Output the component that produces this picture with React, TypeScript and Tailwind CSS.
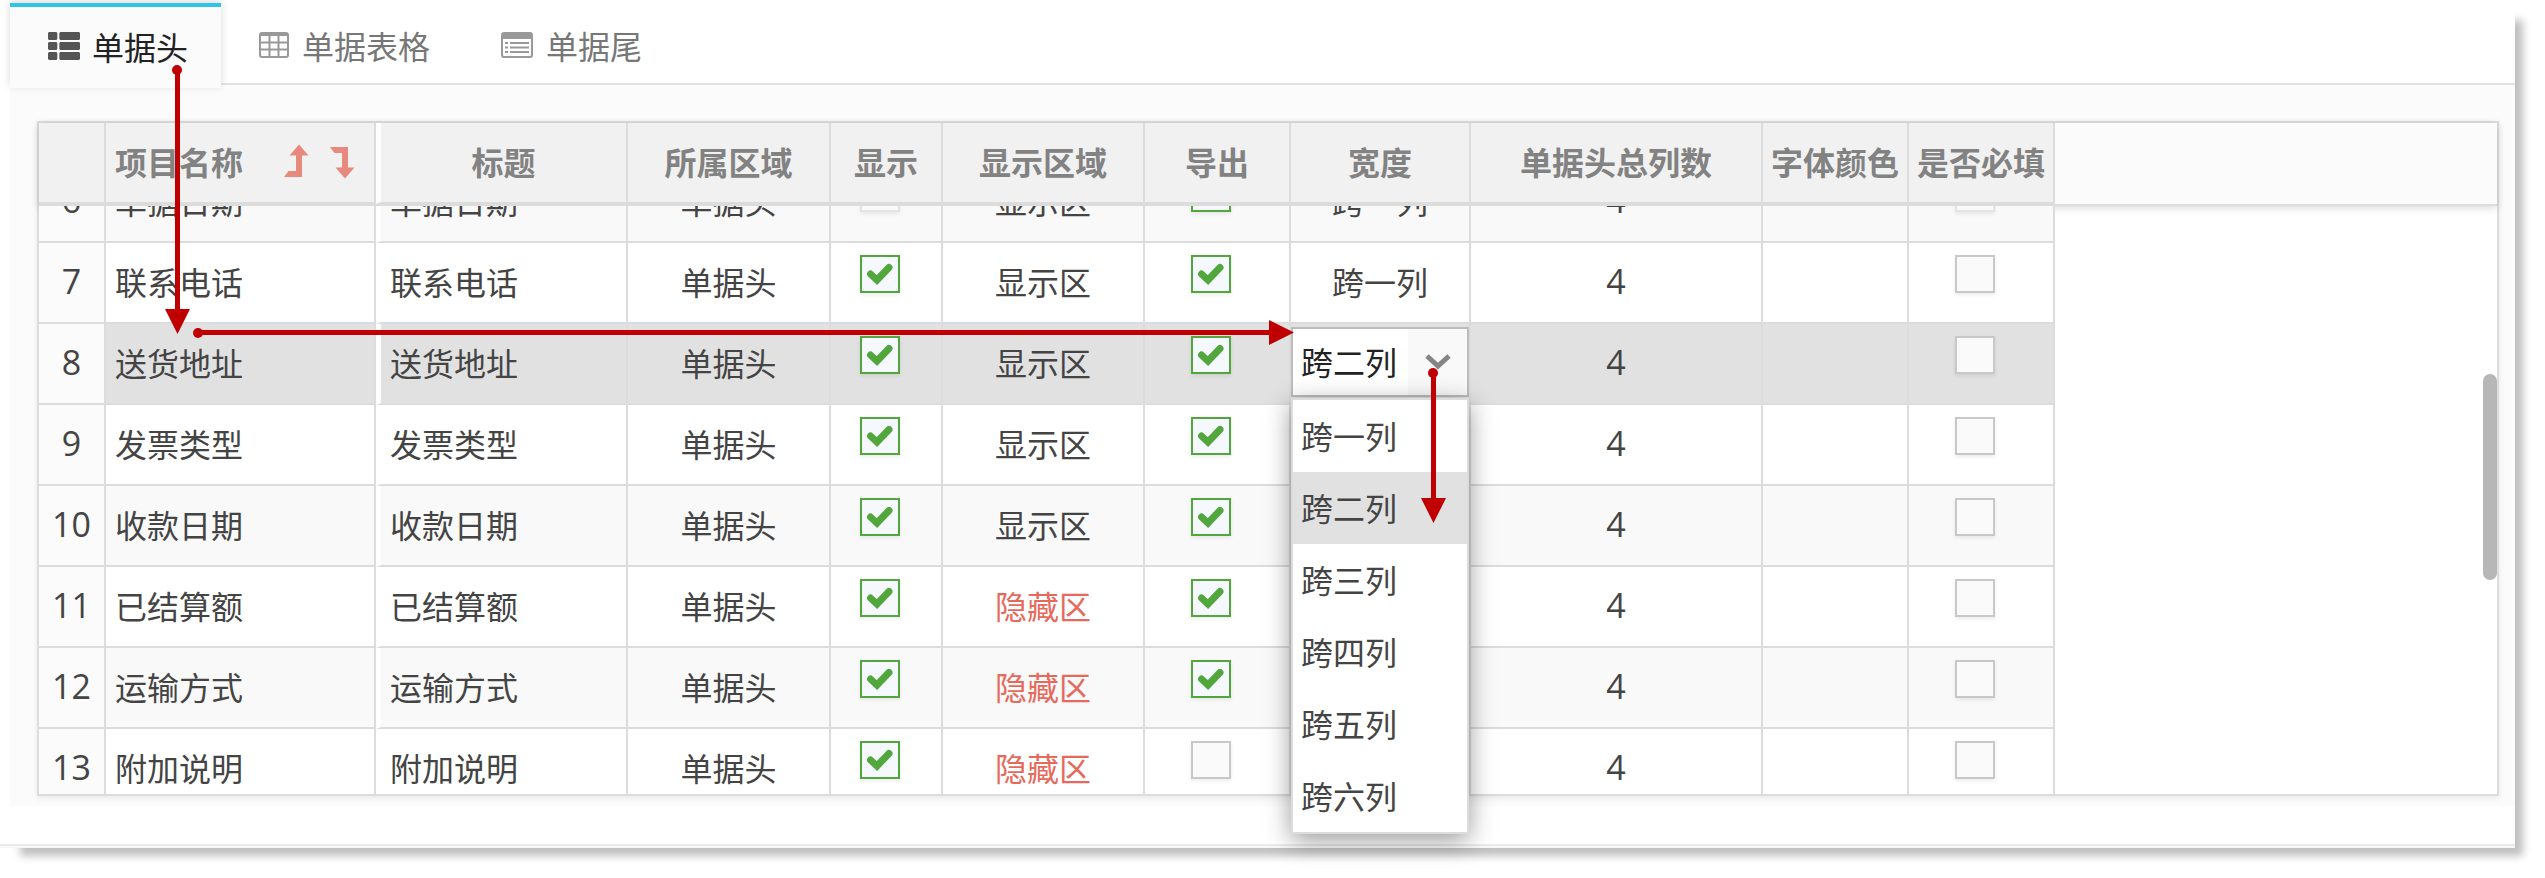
import { useEffect, useRef, useState } from 'react';
import { FaThList } from 'react-icons/fa';

type Row = {
  no: number;
  name: string;
  show: boolean;
  area: string;
  exported: boolean;
  span?: string;
  locked?: boolean;
};

const initialRows: Row[] = [
  { no: 6, name: '单据日期', show: false, area: '显示区', exported: true, span: '跨一列', locked: true },
  { no: 7, name: '联系电话', show: true, area: '显示区', exported: true, span: '跨一列' },
  { no: 8, name: '送货地址', show: true, area: '显示区', exported: true },
  { no: 9, name: '发票类型', show: true, area: '显示区', exported: true },
  { no: 10, name: '收款日期', show: true, area: '显示区', exported: true },
  { no: 11, name: '已结算额', show: true, area: '隐藏区', exported: true },
  { no: 12, name: '运输方式', show: true, area: '隐藏区', exported: true },
  { no: 13, name: '附加说明', show: true, area: '隐藏区', exported: false },
];

const spans = ['跨一列', '跨二列', '跨三列', '跨四列', '跨五列', '跨六列'];
const selectedNo = 8;

const th = 'h-[81px] border-r-2 border-b-2 border-[#dcdcdc] bg-[#f1f1f1] p-0 pb-[3px] text-center font-bold whitespace-nowrap';
const td = 'h-[81px] border-r-2 border-b-2 border-[#dcdcdc] p-0 pb-[3px] text-center align-middle whitespace-nowrap';

function Columns() {
  return (
    <colgroup>
      <col className="w-[67px]" />
      <col className="w-[270px]" />
      <col className="w-[252px]" />
      <col className="w-[203px]" />
      <col className="w-[112px]" />
      <col className="w-[202px]" />
      <col className="w-[146px]" />
      <col className="w-[180px]" />
      <col className="w-[292px]" />
      <col className="w-[146px]" />
      <col className="w-[146px]" />
    </colgroup>
  );
}

function TableIcon() {
  return (
    <svg width="30" height="26" viewBox="0 0 30 26" fill="none" stroke="currentColor" strokeWidth="2">
      <rect x="1" y="1" width="28" height="24" rx="2" />
      <path d="M1 2.500h28" strokeWidth="3" />
      <path d="M1 10.500h28M1 17.500h28M10.500 4v21M19.500 4v21" />
    </svg>
  );
}

function FormIcon() {
  return (
    <svg width="32" height="26" viewBox="0 0 32 26" fill="none" stroke="currentColor" strokeWidth="2">
      <rect x="1" y="1" width="30" height="24" rx="2" />
      <path d="M1 4h30" strokeWidth="6" />
      <path d="M4 11h3M9 11h19M4 15.500h3M9 15.500h19M4 20h3M9 20h19" />
    </svg>
  );
}

function Check({ label, checked, disabled }: { label: string; checked: boolean; disabled?: boolean }) {
  const [on, setOn] = useState(checked);

  return (
    <label className="grid place-items-center pr-3 pb-[14px]">
      <input
        type="checkbox"
        aria-label={label}
        checked={on}
        disabled={disabled}
        onChange={() => setOn(!on)}
        className="col-start-1 row-start-1 h-[38px] w-10 appearance-none border-2 border-[#c8c8c8] bg-[#fafafa] shadow-[0_2px_4px_rgba(0,0,0,0.08)] checked:border-[#52a73c] checked:bg-[#f5f8fd] disabled:border-[#e4e4e4]"
      />
      {on && (
        <svg className="pointer-events-none col-start-1 row-start-1" width="28" height="22" viewBox="0 0 28 22" fill="none" stroke="#52a73c" strokeWidth="7" strokeLinejoin="miter" strokeLinecap="round">
          <path d="M4.500 11l6.500 6l12-12.500" />
        </svg>
      )}
    </label>
  );
}

function Arrows() {
  return (
    <svg className="pointer-events-none absolute top-0 left-0 z-20" width="1480" height="540" fill="#c00000" stroke="none">
      <circle cx="177" cy="70" r="5" />
      <path d="M175 70h5v239h10l-12.500 25l-12.500-25h10z" />
      <circle cx="198" cy="333" r="5" />
      <path d="M198 330h1071v-10l25 12.500l-25 12.500v-10h-1071z" />
      <circle cx="1433" cy="373" r="5" />
      <path d="M1431 373h5v125h10l-12.500 25l-12.500-25h10z" />
    </svg>
  );
}

export default function App() {
  const bodyRef = useRef<HTMLDivElement>(null);
  const [span, setSpan] = useState('跨二列');

  useEffect(() => {
    if (bodyRef.current) {
      bodyRef.current.scrollTop = 44;
    }
  }, []);

  return (
    <div className="relative bg-white pr-[30px] pb-[30px] font-['Noto_Sans_CJK_SC',sans-serif] text-[32px] leading-[44px] text-[#444]">
      <main className="border-b-2 border-[#f8f8f8] bg-white shadow-[14px_14px_8px_-6px_#c0c0c0]">
        <div className="border-b-2 border-[#ebebeb] pb-[38px] pl-[10px]">
          {/* Tabs */}
          <nav className="flex h-[85px] border-b-2 border-[#e3e3e3] pt-[3px]">
            <button className="flex h-[85px] w-[211px] shrink-0 items-center gap-3 border-t-4 border-[#2fc3e8] bg-[#fbfbfb] pb-1 pl-[38px] text-[#222] shadow-[0_-2px_8px_rgba(0,0,0,0.15)]">
              <FaThList className="text-[32px] text-[#555]" />
              单据头
            </button>
            <button className="flex items-center gap-[13px] pt-[3px] pl-[38px] text-[#777]">
              <span className="text-[#999]"><TableIcon /></span>
              单据表格
            </button>
            <button className="flex items-center gap-[13px] pt-[3px] pl-[71px] text-[#777]">
              <span className="text-[#999]"><FormIcon /></span>
              单据尾
            </button>
          </nav>

          <section className="bg-[#fbfbfb] pt-9 pr-4 pb-[10px] pl-[27px]">
            <div className="relative border-2 border-[#dcdcdc] bg-white shadow-[0_2px_6px_rgba(0,0,0,0.08)]">
              {/* Header */}
              <div className="border-b-2 border-[#dcdcdc] bg-[#fbfbfb] shadow-[0_2px_8px_rgba(0,0,0,0.15)]">
                <table className="w-[2016px] table-fixed border-separate border-spacing-0 text-[#828282]">
                  <Columns />
                  <thead>
                    <tr>
                      <th className={th} aria-label="序号" />
                      <th className={th}>
                        <div className="flex items-center pl-[9px]">
                          项目名称
                          <button className="ml-10" aria-label="上移">
                            <svg width="26" height="36" viewBox="0 0 26 36" fill="#e8897e">
                              <path d="M16 1.500l9.500 11h-6.500v21.500H1l4.500-6H13V12.500H6.500z" />
                            </svg>
                          </button>
                          <button className="ml-5" aria-label="下移">
                            <svg width="26" height="36" viewBox="0 0 26 36" fill="#e8897e">
                              <path d="M1 4h18v20.500h6.500l-9.500 11l-9.500-11H13V10H5.500z" />
                            </svg>
                          </button>
                        </div>
                      </th>
                      <th className={`${th} border-l-[5px] border-l-white`}>标题</th>
                      <th className={th}>所属区域</th>
                      <th className={th}>显示</th>
                      <th className={th}>显示区域</th>
                      <th className={th}>导出</th>
                      <th className={th}>宽度</th>
                      <th className={th}>单据头总列数</th>
                      <th className={th}>字体颜色</th>
                      <th className={th}>是否必填</th>
                    </tr>
                  </thead>
                </table>
              </div>

              {/* Rows */}
              <div ref={bodyRef} className="h-[588px] overflow-hidden">
                <table className="w-[2016px] table-fixed border-separate border-spacing-0">
                  <Columns />
                  <tbody>
                    {initialRows.map((row) => {
                      const selected = row.no === selectedNo;
                      return (
                        <tr key={row.no} className={selected ? 'bg-[#e1e1e1]' : 'even:bg-white odd:bg-[#f9f9f9]'}>
                          <td className={`${td} bg-[#fbfbfb] font-['Open_Sans',sans-serif] text-[34px]`}>{row.no}</td>
                          <td className={`${td} pl-[9px] text-left`}>{row.name}</td>
                          <td className={`${td} border-l-[5px] border-l-white pl-[9px] text-left`}>{row.name}</td>
                          <td className={td}>单据头</td>
                          <td className={td}><Check label="显示" checked={row.show} disabled={row.locked} /></td>
                          <td className={`${td} ${row.area === '隐藏区' ? 'text-[#e66a5c]' : ''}`}>{row.area}</td>
                          <td className={td}><Check label="导出" checked={row.exported} /></td>
                          <td className={td}>
                            {selected ? (
                              <div className="relative flex h-[70px] w-[178px] border-2 border-[#bcbcbc] bg-[#f9f9f9] text-[#222]">
                                <select
                                  aria-label="宽度"
                                  value={span}
                                  onChange={(e) => setSpan(e.target.value)}
                                  className="w-full appearance-none bg-linear-to-r from-white from-66% to-[#f9f9f9] to-66% pb-[3px] pl-2"
                                >
                                  {spans.map((s) => (
                                    <option key={s}>{s}</option>
                                  ))}
                                </select>
                                <svg className="pointer-events-none absolute top-6 right-4" width="26" height="18" viewBox="0 0 26 18" fill="none" stroke="#858585" strokeWidth="5">
                                  <path d="M2 3l11 10l11-10" />
                                </svg>
                              </div>
                            ) : (
                              row.span
                            )}
                          </td>
                          <td className={`${td} font-['Open_Sans',sans-serif] text-[34px]`}>4</td>
                          <td className={td} />
                          <td className={td}><Check label="是否必填" checked={false} disabled={row.locked} /></td>
                        </tr>
                      );
                    })}
                  </tbody>
                </table>
              </div>

              {/* Scrollbar thumb */}
              <div className="absolute top-[251px] right-0 h-[206px] w-[14px] rounded-full bg-[#b7b7b7]" />

              {/* Width options */}
              <ul role="listbox" aria-label="宽度选项" className="absolute top-[275px] left-[1252px] z-10 w-[178px] border-2 border-[#dcdcdc] bg-white shadow-[0_6px_24px_rgba(0,0,0,0.4)]">
                {spans.map((s) => (
                  <li
                    key={s}
                    role="option"
                    aria-selected={s === span}
                    onClick={() => setSpan(s)}
                    className={`flex h-[72px] cursor-pointer items-center pb-[3px] pl-2 ${s === span ? 'bg-[#e1e1e1]' : ''}`}
                  >
                    {s}
                  </li>
                ))}
              </ul>
            </div>
          </section>
        </div>
      </main>
      <Arrows />
    </div>
  );
}
